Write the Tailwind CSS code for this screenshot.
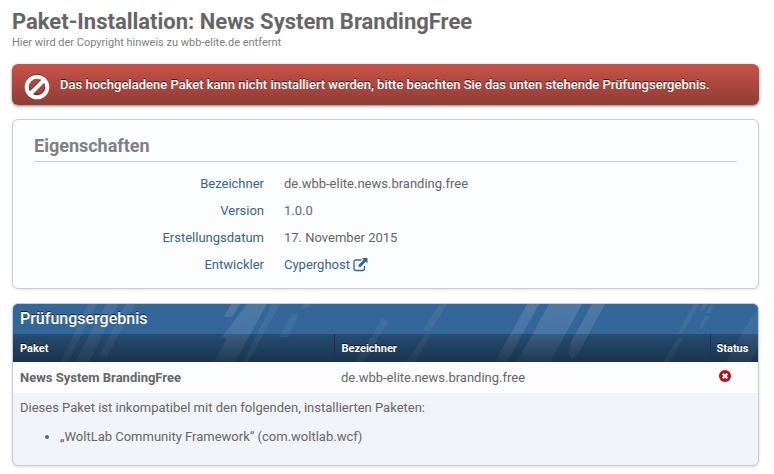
<!DOCTYPE html>
<html lang="de">
  <head>
    <meta charset="UTF-8" />
    <meta name="viewport" content="width=device-width, initial-scale=1.0" />
    <title>Paket-Installation: News System BrandingFree</title>
    <script src="https://cdn.jsdelivr.net/npm/@tailwindcss/browser@4"></script>
  </head>
  <body
    class="bg-white font-['Trebuchet_MS','Roboto',sans-serif] text-[13px] leading-[17px] text-[#666]"
  >
    <main class="pt-2 pr-[15px] pb-2 pl-3">
      <header>
        <h1 class="text-[22px] leading-[28px] font-bold">
          Paket-Installation: News System BrandingFree
        </h1>
        <p class="text-[11px] leading-[14px] text-[#808080]">
          Hier wird der Copyright hinweis zu wbb-elite.de entfernt
        </p>
      </header>

      <p
        role="alert"
        class="mt-[14px] flex min-h-[41px] items-center rounded-md bg-linear-to-b from-[#c8534a] to-[#8f3c36] pl-3 font-medium text-white shadow-[0_1px_3px_rgba(0,0,0,0.5)] text-shadow-[0_-1px_0_rgb(0_0_0/0.7)]"
      >
        <svg class="mt-1 mr-[10px] size-[26px] shrink-0" viewBox="0 0 26 26" fill="none">
          <g stroke="#5c1a16" stroke-width="4">
            <circle cx="13" cy="12" r="10" />
            <path d="M6 19 20 5" />
          </g>
          <g stroke="#fff" stroke-width="4">
            <circle cx="13" cy="13" r="10.3" />
            <path d="M6 20 20 6" />
          </g>
        </svg>
        Das hochgeladene Paket kann nicht installiert werden, bitte beachten Sie
        das unten stehende Prüfungsergebnis.
      </p>

      <section
        class="mt-[14px] rounded-md border border-[#ccc] bg-[#fcfdff] px-[21px] pt-[14px] pb-[15px] shadow-[0_1px_3px_rgba(0,0,0,0.1)]"
      >
        <h2
          class="border-b border-[#ccc] pb-1 text-[18px] leading-[23px] font-bold text-[#808080]"
        >
          Eigenschaften
        </h2>
        <dl class="mt-[13px] grid grid-cols-[230px_1fr] gap-x-5 gap-y-[10px]">
          <dt class="text-right text-[#369]">Bezeichner</dt>
          <dd>de.wbb-elite.news.branding.free</dd>
          <dt class="text-right text-[#369]">Version</dt>
          <dd>1.0.0</dd>
          <dt class="text-right text-[#369]">Erstellungsdatum</dt>
          <dd>17. November 2015</dd>
          <dt class="text-right text-[#369]">Entwickler</dt>
          <dd>
            <a class="inline-flex items-center gap-[3px] text-[#369]" href="#">
              Cyperghost
              <svg class="h-[14px] w-[15px]" viewBox="0 0 15 14">
                <path
                  d="M8.5 2H3a2 2 0 0 0-2 2v6.500a2 2 0 0 0 2 2h6.500a2 2 0 0 0 2-2V8"
                  fill="none"
                  stroke="currentColor"
                  stroke-width="1.300"
                />
                <path d="M9 0h5.500v5.500L12.700 3.800 7 9.500 5 7.500 10.700 1.800z" fill="currentColor" />
              </svg>
            </a>
          </dd>
        </dl>
      </section>

      <section
        class="relative mt-[14px] overflow-hidden rounded-md border border-[#c5ccd3] bg-[#f0f3f8] shadow-[0_1px_3px_rgba(0,0,0,0.15)]"
      >
        <h2
          class="bg-[#369] px-[7px] pt-1 pb-[5px] text-[16px] leading-[21px] font-medium text-white text-shadow-[0_-1px_0_rgb(0_0_0/0.7)]"
        >
          Prüfungsergebnis
        </h2>

        <table class="w-full text-left">
          <thead
            class="bg-linear-to-b from-[#264d73] to-[#1a334c] text-[11px] text-white text-shadow-[0_-1px_0_rgb(0_0_0/0.7)]"
          >
            <tr>
              <th class="h-7 border-r border-[#1a344f] px-[7px] font-bold">Paket</th>
              <th class="h-7 w-[376px] border-r border-[#1a344f] px-[7px] font-bold">
                Bezeichner
              </th>
              <th class="h-7 w-[48px] px-[6px] font-bold">Status</th>
            </tr>
          </thead>
          <tbody>
            <tr class="bg-[#fcfdff]">
              <td class="h-[31px] px-[7px] font-bold">News System BrandingFree</td>
              <td class="h-[31px] px-[7px]">de.wbb-elite.news.branding.free</td>
              <td class="h-[31px] px-[9px]">
                <svg class="mb-[3px] size-3" viewBox="0 0 12 12" role="img" aria-label="Fehler">
                  <circle cx="6" cy="6" r="6" fill="#c00b1a" />
                  <path d="m3.700 3.700 4.600 4.600m0-4.600-4.600 4.600" stroke="#fff" stroke-width="2.200" />
                </svg>
              </td>
            </tr>
            <tr>
              <td colspan="3" class="px-[7px] pt-[6px] pb-5">
                <p>Dieses Paket ist inkompatibel mit den folgenden, installierten Paketen:</p>
                <ul class="mt-3 list-disc pl-10">
                  <li>„WoltLab Community Framework“ (com.woltlab.wcf)</li>
                </ul>
              </td>
            </tr>
          </tbody>
        </table>

        <!-- diagonal light streaks across both header bars -->
        <svg
          class="pointer-events-none absolute inset-x-0 top-0 h-[58px] w-full"
          viewBox="0 0 745 58"
          preserveAspectRatio="xMaxYMin slice"
        >
          <defs>
            <linearGradient id="soft" gradientUnits="userSpaceOnUse" x1="0" y1="0" x2="0" y2="58">
              <stop offset="0" stop-color="#fff" stop-opacity="0.07" />
              <stop offset="1" stop-color="#fff" stop-opacity="0.04" />
            </linearGradient>
            <linearGradient id="bright" gradientUnits="userSpaceOnUse" x1="0" y1="0" x2="0" y2="58">
              <stop offset="0" stop-color="#fff" stop-opacity="0.13" />
              <stop offset="0.5" stop-color="#fff" stop-opacity="0.1" />
              <stop offset="1" stop-color="#fff" stop-opacity="0.03" />
            </linearGradient>
          </defs>
          <g fill="url(#soft)">
            <path d="M75 0h9L55 58h-7zM93 0h12L76 58H62zM113 0h9L94 52h-8z" />
            <path d="M259 0h8l-32 58h-5zM370 14l5 4-24 40h-9z" />
            <path d="M423 5l4-5h7l-16 27h-8zM412 30h6l-16 28h-9z" />
            <path d="M681 0h5l-17 30h-5zM665 34h5l-9 17-4 7h-7zM690 0h5l-4 7h-4zM698 1h4l-5 8h-5zM692 12h4l-7 13h-4z" />
            <path d="M745 4v40l-8 14h-24l19-34z" />
            <path d="M291 0h6l-3 4h-6zM279 10h7l-11 23h-9z" />
          </g>
          <g fill="url(#bright)">
            <path d="M218 0h9l-8 13h-8zM234 0h20l-19 34-13 24h-21l13-24h-6z" />
            <path d="M514 0h12l-32 58h-12zM536 0h33l-32 58h-33zM579 0h13l-27 50-6 5-3-5 2-12z" />
          </g>
        </svg>
      </section>
    </main>
  </body>
</html>
